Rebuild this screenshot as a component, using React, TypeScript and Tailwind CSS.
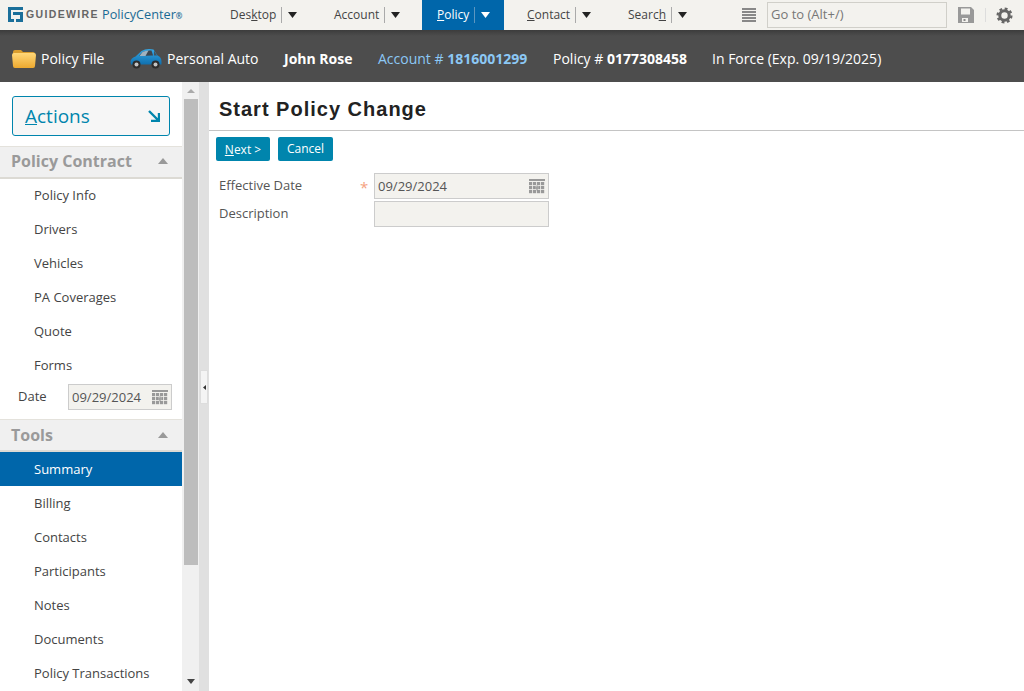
import { ReactNode } from 'react';

const sans = { fontFamily: '"Open Sans", sans-serif' };

function Caret({ light }: { light?: boolean }) {
  return (
    <svg width="9" height="6" viewBox="0 0 9 6" className="ml-[6px]">
      <path d="M0 0h9L4.5 6z" fill={light ? '#fff' : '#222'} />
    </svg>
  );
}

function NavItem({ label, width, active, pad }: { label: ReactNode; width: number; active?: boolean; pad: number }) {
  return (
    <div
      className={`h-full flex items-center text-[12px] ${active ? 'bg-[#0066aa] text-white' : 'text-[#444]'}`}
      style={{ width, paddingLeft: pad }}
    >
      <span>{label}</span>
      <span className={`ml-[5px] w-px h-[16px] ${active ? 'bg-[#5c96c0]' : 'bg-[#aaa]'}`} />
      <Caret light={active} />
    </div>
  );
}

function CalendarIcon() {
  return (
    <svg width="16" height="15" viewBox="0 0 16 15" className="shrink-0">
      <rect width="16" height="2" fill="#999" />
      {[3, 7, 11].map((y) =>
        [0, 4, 8, 12].map((x) => <rect key={`${x}-${y}`} x={x} y={y} width="3.2" height="3.2" fill="#999" />),
      )}
      <path d="M6.5 7.5h3v3h-3z" fill="#f3f2ee" />
      <path d="M7.5 6.5h1v5h-1zM5.5 8.5h5v1h-5z" fill="#888" />
    </svg>
  );
}

function SideLink({ label, active, tools }: { label: string; active?: boolean; tools?: boolean }) {
  return (
    <div
      className={`h-[34px] pl-[34px] flex items-center text-[13px] ${tools ? 'pt-[1px]' : ''} ${active ? 'bg-[#0066aa] text-white' : 'text-[#444]'}`}
    >
      {label}
    </div>
  );
}

function SideHeader({ label, tools }: { label: string; tools?: boolean }) {
  return (
    <div
      className={`h-[33px] bg-[#f0f0f0] border-t border-[#e4e2dc] border-b-2 border-b-[#dcdad4] pl-[11px] pr-[14px] flex items-center justify-between ${tools ? '' : 'pb-[2px]'}`}
    >
      <span className="text-[16px] font-bold text-[#9a9a9a]">{label}</span>
      <svg width="10" height="6" viewBox="0 0 10 6">
        <path d="M0 6h10L5 0z" fill="#999" />
      </svg>
    </div>
  );
}

export default function App() {
  return (
    <div className="w-[1024px] h-[691px] overflow-hidden flex flex-col bg-white" style={sans}>
      {/* Top nav */}
      <header className="h-[30px] shrink-0 bg-[#f3f2ee] flex items-center">
        <div className="w-[230px] pl-[8px] flex items-center shrink-0">
          <svg width="15" height="15" viewBox="0 0 15 15" className="shrink-0">
            <path d="M0 0h15v3H3v9h3v3H0z" fill="#1a6f9a" />
            <path d="M5 5h10v10H8v-3h4V8H5z" fill="#1a6f9a" />
          </svg>
          <span className="ml-[3px] w-[76px] shrink-0 text-[10.5px] font-bold tracking-[1.35px] text-[#666]" style={{ fontFamily: '"Liberation Sans", sans-serif' }}>
            GUIDEWIRE
          </span>
          <span className="text-[12.7px] text-[#1a6a94]">PolicyCenter</span>
          <span className="text-[8px] leading-[8px] font-bold text-[#1a6a94] self-start mt-[7px]">®</span>
        </div>
        <NavItem label={<>Des<u>k</u>top</>} width={104} pad={0} />
        <NavItem label="Account" width={88} pad={0} />
        <NavItem label={<><u>P</u>olicy</>} width={82} pad={15} active />
        <NavItem label={<><u>C</u>ontact</>} width={101} pad={23} />
        <NavItem label={<>Searc<u>h</u></>} width={137} pad={23} />
        <div className="flex flex-col gap-[1.5px] w-[14px] shrink-0">
          {[0, 1, 2, 3, 4].map((i) => (
            <div key={i} className="h-[1.5px] bg-[#888]" />
          ))}
        </div>
        <div className="ml-[11px] w-[180px] h-[26px] border border-[#d0cfc9] flex items-center pl-[3px] text-[13px] text-[#777]">
          Go to (Alt+/)
        </div>
        <svg width="16" height="16" viewBox="0 0 16 16" className="ml-[11px] shrink-0">
          <path d="M0 0h13l3 3v13H0z" fill="#999" />
          <path d="M3 1.500h9v6H3z" fill="#f3f2ee" />
          <path d="M4 11h6v4H4z" fill="#f3f2ee" />
          <path d="M5.500 12h2v2h-2z" fill="#888" />
        </svg>
        <div className="ml-[11px] w-px h-[14px] bg-[#ddd]" />
        <svg width="17" height="17" viewBox="0 0 18 18" className="ml-[10px] shrink-0">
          <circle cx="9" cy="9" r="5" fill="none" stroke="#666" strokeWidth="3.2" />
          <circle cx="9" cy="9" r="7.3" fill="none" stroke="#666" strokeWidth="2.4" strokeDasharray="3 2.73" />
        </svg>
      </header>

      {/* Info bar */}
      <div className="h-[52px] shrink-0 bg-[linear-gradient(#3c3c3c,#4d4d4d_6px)] flex items-center pl-[12px] pt-[5px] text-[14px] text-white">
        <svg width="24" height="19" viewBox="0 0 24 19" className="shrink-0">
          <defs>
            <linearGradient id="folder" x1="0" y1="0" x2="0" y2="1">
              <stop offset="0" stopColor="#ffd778" />
              <stop offset="1" stopColor="#eda92f" />
            </linearGradient>
          </defs>
          <path d="M1 3q0-2 2-2h6l2 2h10q2 0 2 2v2H1z" fill="#d99d2e" />
          <path d="M0 6q0-2 2-2h20q2 0 2 2l-1 11q0 2-2 2H3q-2 0-2-2z" fill="url(#folder)" />
        </svg>
        <span className="ml-[5px] w-[89px] shrink-0">Policy File</span>
        <svg width="32" height="21" viewBox="0 0 32 21" className="shrink-0">
          <defs>
            <linearGradient id="carBody" x1="0" y1="0" x2="0" y2="1">
              <stop offset="0" stopColor="#35a8e6" />
              <stop offset="1" stopColor="#0f6fae" />
            </linearGradient>
          </defs>
          <path d="M0.500 14q0-4 5-5.500l6-5.500q5-3 12-1.500l4 6q4 1.500 4 6v3H1z" fill="url(#carBody)" />
          <path d="M12.500 4q4-2 9-1.500l1.500 5-14 0.500z" fill="#3d4650" />
          <path d="M12.500 4q3-1.500 6-1.500l-3 5.500h-6z" fill="#9fb2c0" />
          <path d="M24 2.500l3 5h-3z" fill="#46525c" />
          <circle cx="6.500" cy="16.500" r="4" fill="#2c2c2c" />
          <circle cx="6.500" cy="16.500" r="2" fill="#c4c4c4" />
          <circle cx="25.500" cy="16.500" r="4" fill="#2c2c2c" />
          <circle cx="25.500" cy="16.500" r="2" fill="#c4c4c4" />
        </svg>
        <span className="ml-[5px] w-[117px] shrink-0">Personal Auto</span>
        <span className="w-[94px] shrink-0 font-bold">John Rose</span>
        <span className="w-[175px] shrink-0 text-[#8cc8f5]">
          Account # <b>1816001299</b>
        </span>
        <span className="w-[159px] shrink-0">
          Policy # <b>0177308458</b>
        </span>
        <span>In Force (Exp. 09/19/2025)</span>
      </div>

      <div className="flex-1 flex min-h-0">
        {/* Sidebar */}
        <aside className="w-[182px] shrink-0 overflow-hidden flex flex-col">
          <div className="px-[12px] pt-[14px] pb-[10px]">
            <div className="h-[40px] rounded-[3px] border border-[#0085ad] bg-[#f6f6f6] pl-[12px] pr-[9px] flex items-center justify-between">
              <span className="text-[19px] text-[#0085ad]">
                <u>A</u>ctions
              </span>
              <svg width="12" height="12" viewBox="0 0 12 12">
                <path d="M1 1l9 9M11 3v8H3" fill="none" stroke="#0085ad" strokeWidth="2.400" />
              </svg>
            </div>
          </div>
          <SideHeader label="Policy Contract" />
          <SideLink label="Policy Info" />
          <SideLink label="Drivers" />
          <SideLink label="Vehicles" />
          <SideLink label="PA Coverages" />
          <SideLink label="Quote" />
          <SideLink label="Forms" />
          <div className="h-[36px] flex items-start pl-[18px] pr-[10px] pt-[1px] text-[13px] text-[#444]">
            <span className="w-[50px] pt-[3px]">Date</span>
            <div className="w-[104px] h-[26px] bg-[#f3f2ee] border border-[#ccc] pl-[3px] pr-[3px] pt-[1px] flex items-center justify-between text-[#555]">
              09/29/2024
              <CalendarIcon />
            </div>
          </div>
          <SideHeader label="Tools" tools />
          <SideLink label="Summary" active tools />
          <SideLink label="Billing" tools />
          <SideLink label="Contacts" tools />
          <SideLink label="Participants" tools />
          <SideLink label="Notes" tools />
          <SideLink label="Documents" tools />
          <SideLink label="Policy Transactions" tools />
        </aside>

        {/* Scrollbar */}
        <div className="w-[17px] shrink-0 bg-[#f0f0f0] flex flex-col items-center pt-[7px]">
          <svg width="8" height="4" viewBox="0 0 8 4">
            <path d="M0 4h8L4 0z" fill="#aaa" />
          </svg>
          <div className="mt-[6px] w-[14px] h-[466px] bg-[#bdbdbd]" />
          <svg width="8" height="5" viewBox="0 0 8 5" className="mt-[114px]">
            <path d="M0 0h8L4 5z" fill="#444" />
          </svg>
        </div>

        {/* Splitter */}
        <div className="relative w-[10px] shrink-0 bg-[#e0e0e0]">
          <div className="absolute left-[1px] top-[288px] w-[8px] h-[34px] bg-[#f4f4f4] border border-[#ddd] flex items-center justify-center">
            <svg width="3" height="5" viewBox="0 0 3 5">
              <path d="M3 0v5L0 2.500z" fill="#333" />
            </svg>
          </div>
        </div>

        {/* Main */}
        <main className="flex-1 min-w-0">
          <div className="h-[49px] border-b border-[#c4c4c4] pl-[10px] pt-[13px]">
            <h1 className="text-[20px] leading-[28px] font-bold tracking-[1px] text-[#222]" style={{ fontFamily: '"Liberation Sans", sans-serif' }}>
              Start Policy Change
            </h1>
          </div>
          <div className="pl-[7px] pt-[6px] flex gap-[8px]">
            <button type="button" className="w-[54px] h-[24px] pt-[1px] rounded-[2px] bg-[#0085ad] text-white text-[12px]">
              <u>N</u>ext &gt;
            </button>
            <button type="button" className="w-[55px] h-[24px] rounded-[2px] bg-[#0085ad] text-white text-[12px]">
              Cancel
            </button>
          </div>
          <div className="pl-[10px] pt-[12px] text-[13px] text-[#555]">
            <div className="flex h-[28px]">
              <span className="w-[141px] pt-[3px]">Effective Date</span>
              <span className="w-[14px] pt-[3px] text-[#f5a280] text-[15px]">*</span>
              <div className="w-[175px] h-[26px] bg-[#f3f2ee] border border-[#ccc] pl-[3px] pr-[3px] pt-[1px] flex items-center justify-between">
                09/29/2024
                <CalendarIcon />
              </div>
            </div>
            <div className="flex">
              <span className="w-[155px] pt-[3px]">Description</span>
              <div className="w-[175px] h-[26px] bg-[#f3f2ee] border border-[#ccc]" />
            </div>
          </div>
        </main>
      </div>
    </div>
  );
}
